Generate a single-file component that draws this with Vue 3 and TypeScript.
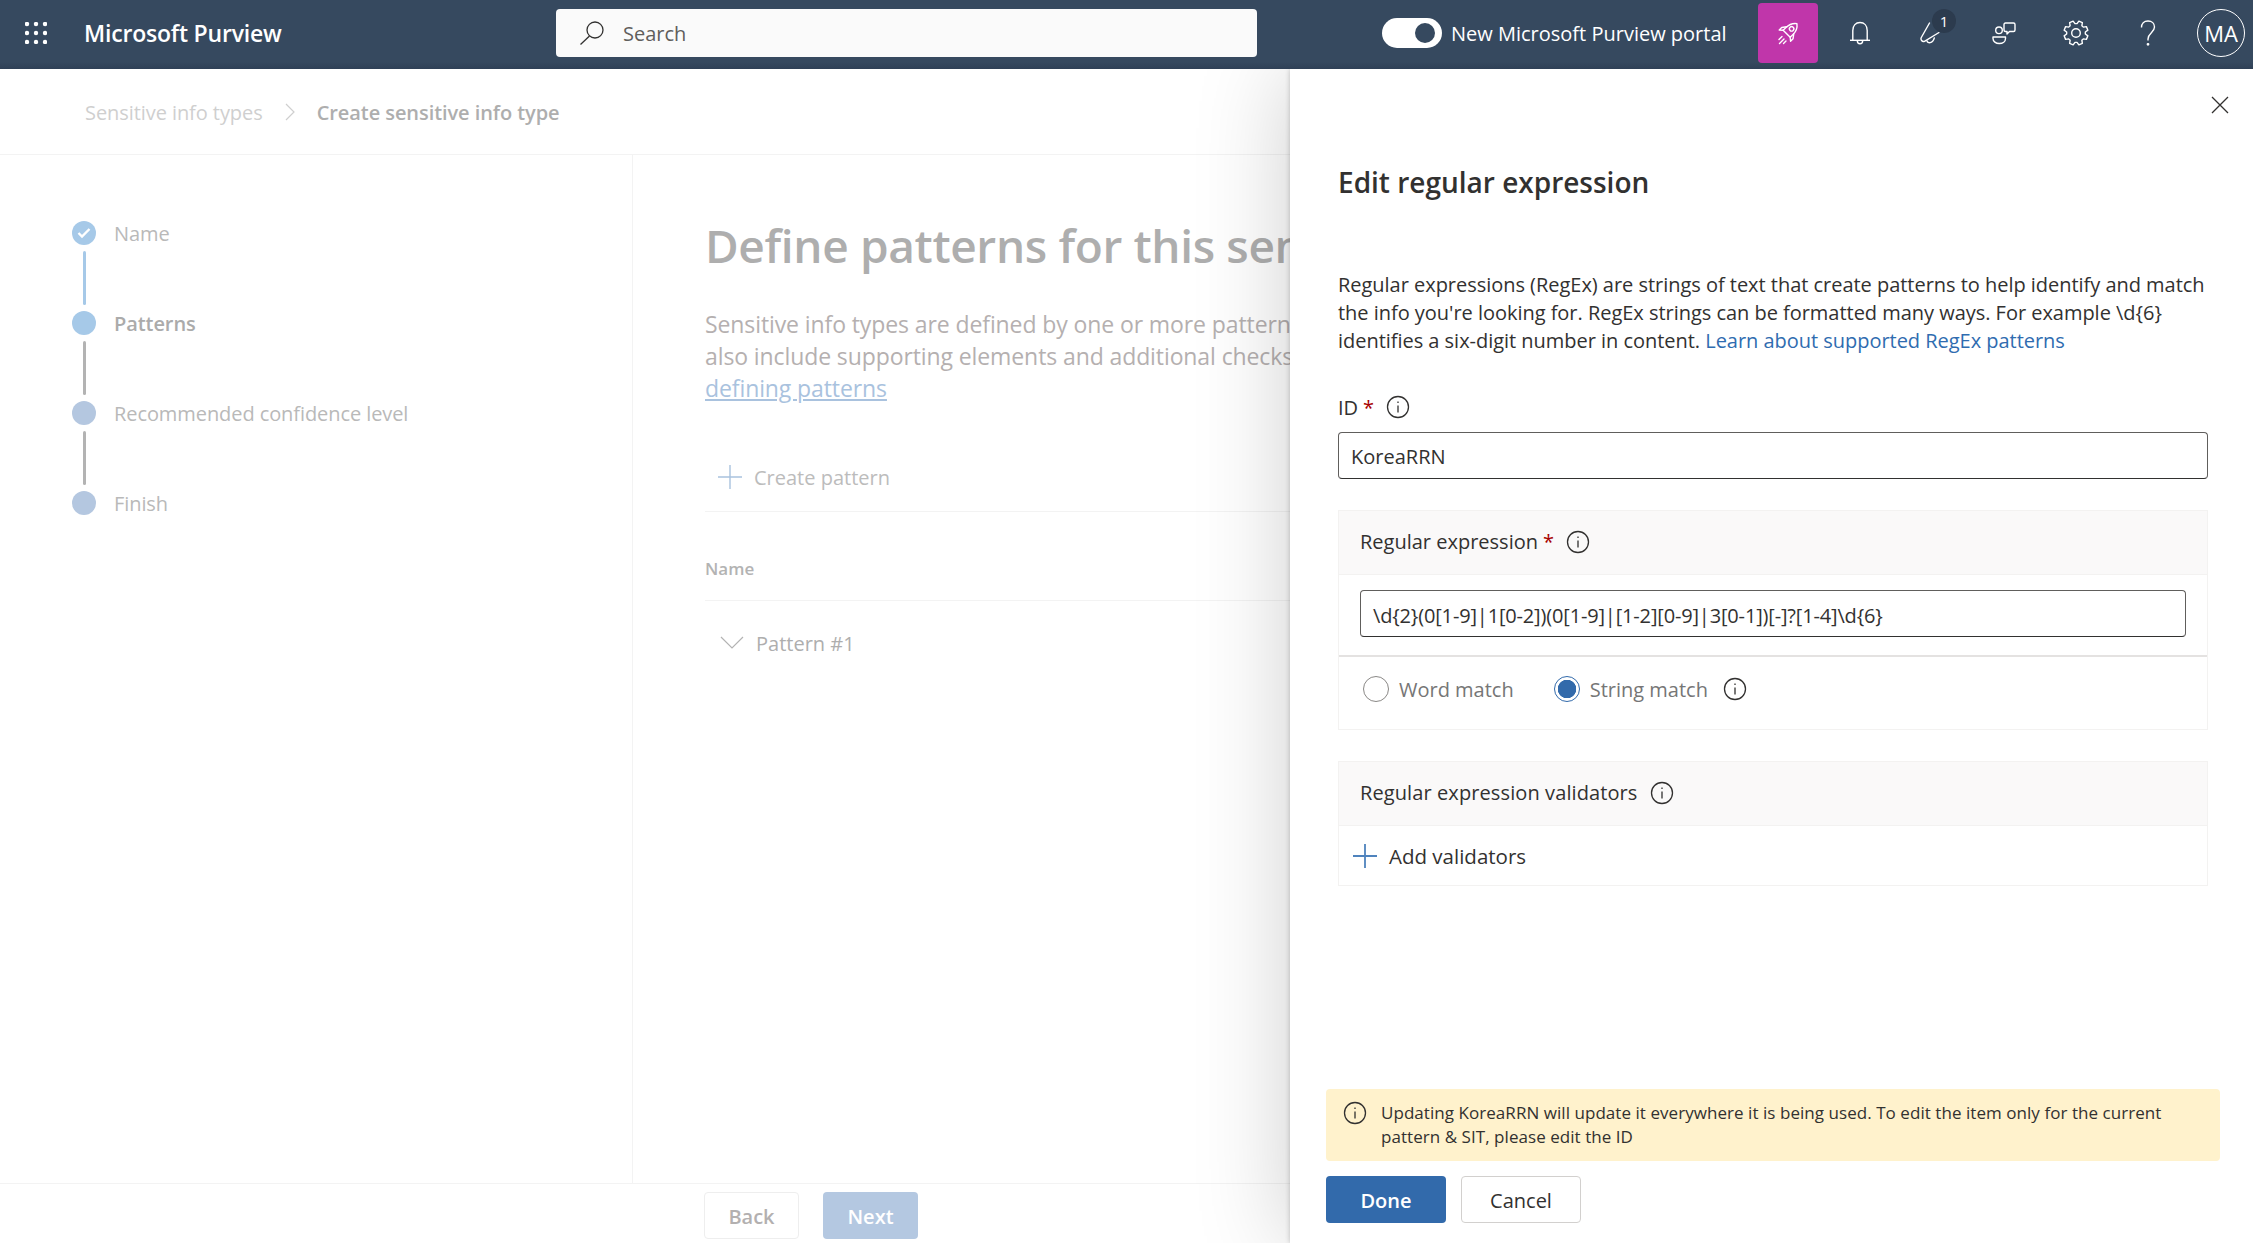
<template>
  <div class="page">
    <header class="topbar">
      <div class="brand">
        <svg class="waffle" width="22" height="22" viewBox="0 0 22 22" fill="#fff">
          <template v-for="cy in [2, 11, 20]" :key="cy">
            <circle v-for="cx in [2, 11, 20]" :key="cx" :cx="cx" :cy="cy" r="2.2" />
          </template>
        </svg>
        <span class="product">Microsoft Purview</span>
      </div>
      <div class="search">
        <svg width="26" height="24" viewBox="0 0 26 24" fill="none" stroke="#323130" stroke-width="1.3">
          <circle cx="16" cy="9" r="8" />
          <path d="M10.5 15 1.5 23.5" />
        </svg>
        <span>Search</span>
      </div>
      <div class="actions">
        <div class="toggle"><span class="knob"></span></div>
        <span class="toggle-label">New Microsoft Purview portal</span>
        <button class="rocket">
          <svg width="24" height="24" viewBox="0 0 24 24" fill="none" stroke="#fff" stroke-width="1.4" stroke-linejoin="round" stroke-linecap="round">
            <g transform="translate(13.5 10) rotate(45)">
              <path d="M0-10.5C4-7.500 5-3.500 5 0v4H-5V0c0-3.500 1-7.500 5-10.500Z" />
              <circle cx="0" cy="-3" r="2.2" />
              <path d="M-5-1-8 3v3.500l3-2.500M5-1l3 4v3.500l-3-2.500" />
            </g>
            <path d="M6 15.500 3 18.500M8 18 3.500 22.500M10 20l-2.500 2.500" />
          </svg>
        </button>
        <button class="tool first-tool">
          <svg width="22" height="24" viewBox="0 0 22 24" fill="none" stroke="#fff" stroke-width="1.4">
            <path d="M3.800 19V9.500C3.800 4.500 6.800 1.500 11 1.500s7.200 3 7.200 8V19" />
            <path d="M1 19.300h20" />
            <path d="M8.300 19.500c0 2 1.100 3.300 2.700 3.300s2.700-1.300 2.700-3.300" />
          </svg>
        </button>
        <button class="tool">
          <svg width="24" height="24" viewBox="0 0 24 24" fill="none" stroke="#fff" stroke-width="1.4" stroke-linecap="round">
            <path d="M9.500 2 1.300 16.500c-1 2 .7 4.700 3.200 3.800L19 11.500" />
            <path d="M7 20c.5 2.500 5.500 3 7.300-3" />
          </svg>
          <span class="badge">1</span>
        </button>
        <button class="tool">
          <svg width="24" height="23" viewBox="0 0 24 23" fill="none" stroke="#fff" stroke-width="1.4" stroke-linejoin="round">
            <circle cx="7" cy="8.300" r="3.300" />
            <path d="M1 15h12.500v1.500c0 3-2.700 5-6.200 5S1 19.500 1 16.500V15Z" />
            <path d="M12 2.500Q12 1 13.500 1h8Q23 1 23 2.500V8q0 1.500-1.500 1.500h-4L15 12V9.500h-1.500Q12 9.500 12 8V2.500Z" />
          </svg>
        </button>
        <button class="tool">
          <svg width="26" height="26" viewBox="0 0 26 26" fill="none" stroke="#fff" stroke-width="1.4" stroke-linejoin="round">
            <path :d="gearPath" />
            <circle cx="13" cy="13" r="4.300" />
          </svg>
        </button>
        <button class="tool">
          <svg width="16" height="26" viewBox="0 0 16 26" fill="none" stroke="#fff" stroke-width="1.4">
            <path d="M1.500 7.500C1.500 3.500 4 1 8 1s6.500 2.500 6.500 6c0 5.500-6.500 6-6.500 12v1.500" />
            <circle cx="8" cy="24.300" r=".7" fill="#fff" />
          </svg>
        </button>
        <div class="avatar">MA</div>
      </div>
    </header>

    <div class="behind">
      <div class="crumbs">
        <span class="crumb-link">Sensitive info types</span>
        <svg width="12" height="18" viewBox="0 0 12 18" fill="none" stroke="#cfcfcf" stroke-width="1.2">
          <path d="m2 1 8 8-8 8" />
        </svg>
        <span class="crumb-current">Create sensitive info type</span>
      </div>
      <div class="wizard">
        <nav class="steps">
          <div v-for="(step, i) in steps" :key="step.label" class="step">
            <div class="rail">
              <span class="dot" :class="step.state">
                <svg v-if="step.state === 'complete'" width="14" height="12" viewBox="0 0 14 12" fill="none" stroke="#fff" stroke-width="2.4">
                  <path d="m1.500 6 3.500 3.500 7.500-7.500" />
                </svg>
              </span>
              <span v-if="i < steps.length - 1" class="link" :class="{ reached: step.state === 'complete' }"></span>
            </div>
            <span class="step-label" :class="{ active: step.state === 'current' }">{{ step.label }}</span>
          </div>
        </nav>
        <main class="content">
          <h1>Define patterns for this sen</h1>
          <p class="intro">
            Sensitive info types are defined by one or more pattern<br />
            also include supporting elements and additional checks<br />
            <a>defining patterns</a>
          </p>
          <div class="create">
            <svg width="26" height="26" viewBox="0 0 26 26" stroke="#a9c2de" stroke-width="1.4">
              <path d="M13 1v24M1 13h24" />
            </svg>
            <span>Create pattern</span>
          </div>
          <div class="col-head">Name</div>
          <div class="pattern-row">
            <svg width="24" height="14" viewBox="0 0 24 14" fill="none" stroke="#b3b3b3" stroke-width="1.2">
              <path d="m1 1 11 11L23 1" />
            </svg>
            <span>Pattern #1</span>
          </div>
        </main>
      </div>
      <footer class="wizard-foot">
        <button class="ghost">Back</button>
        <button class="next">Next</button>
      </footer>
    </div>

    <aside class="panel">
      <div class="close">
        <svg width="18" height="18" viewBox="0 0 18 18" stroke="#323130" stroke-width="1.3">
          <path d="m1 1 16 16M17 1 1 17" />
        </svg>
      </div>
      <div class="panel-body">
        <h2>Edit regular expression</h2>
        <p class="about">
          Regular expressions (RegEx) are strings of text that create patterns to help identify and match<br />
          the info you're looking for. RegEx strings can be formatted many ways. For example \d{6}<br />
          identifies a six-digit number in content.
          <a>Learn about supported RegEx patterns</a>
        </p>
        <label class="field-label">
          ID <span class="req">*</span>
          <svg class="info" width="24" height="24" viewBox="0 0 24 24" fill="none" stroke="#323130" stroke-width="1.3">
            <circle cx="12" cy="12" r="10.500" />
            <path d="M12 10.500v7M12 6.500v1.500" />
          </svg>
        </label>
        <div class="input">KoreaRRN</div>
        <section class="card regex-card">
          <div class="card-head">
            Regular expression <span class="req">*</span>
            <svg class="info" width="24" height="24" viewBox="0 0 24 24" fill="none" stroke="#323130" stroke-width="1.3">
              <circle cx="12" cy="12" r="10.500" />
              <path d="M12 10.500v7M12 6.500v1.500" />
            </svg>
          </div>
          <div class="regex-input">
            <div class="input regex-value">{{ regex }}</div>
          </div>
          <div class="match">
            <span class="radio"></span>
            <span class="match-label">Word match</span>
            <span class="radio on"></span>
            <span class="match-label">String match</span>
            <svg class="info match-info" width="24" height="24" viewBox="0 0 24 24" fill="none" stroke="#323130" stroke-width="1.3">
              <circle cx="12" cy="12" r="10.500" />
              <path d="M12 10.500v7M12 6.500v1.500" />
            </svg>
          </div>
        </section>
        <section class="card validators">
          <div class="card-head">
            <span class="validators-title">Regular expression validators</span>
            <svg class="info" width="24" height="24" viewBox="0 0 24 24" fill="none" stroke="#323130" stroke-width="1.3">
              <circle cx="12" cy="12" r="10.500" />
              <path d="M12 10.500v7M12 6.500v1.500" />
            </svg>
          </div>
          <div class="add">
            <svg width="24" height="24" viewBox="0 0 24 24" stroke="#4f83bd" stroke-width="1.8">
              <path d="M12 0v24M0 12h24" />
            </svg>
            <span>Add validators</span>
          </div>
        </section>
      </div>
      <div class="panel-foot">
        <div class="notice">
          <svg width="24" height="24" viewBox="0 0 24 24" fill="none" stroke="#323130" stroke-width="1.3">
            <circle cx="12" cy="12" r="10.500" />
            <path d="M12 10.500v7M12 6.500v1.500" />
          </svg>
          <span>Updating KoreaRRN will update it everywhere it is being used. To edit the item only for the current<br />pattern &amp; SIT, please edit the ID</span>
        </div>
        <div class="panel-buttons">
          <button class="primary">Done</button>
          <button class="cancel">Cancel</button>
        </div>
      </div>
    </aside>
  </div>
</template>

<script setup lang="ts">
type StepState = 'complete' | 'current' | 'todo';

const steps: { label: string; state: StepState }[] = [
  { label: 'Name', state: 'complete' },
  { label: 'Patterns', state: 'current' },
  { label: 'Recommended confidence level', state: 'todo' },
  { label: 'Finish', state: 'todo' },
];

const regex = '\\d{2}(0[1-9]|1[0-2])(0[1-9]|[1-2][0-9]|3[0-1])[-]?[1-4]\\d{6}';

// eight-tooth cog around the centre of a 26 unit box
function buildGear(teeth: number, outer: number, inner: number): string {
  const step = (Math.PI * 2) / teeth;
  const points: string[] = [];
  for (let i = 0; i < teeth; i++) {
    const a = i * step + step / 2;
    for (const [offset, r] of [
      [-0.36, inner],
      [-0.2, outer],
      [0.2, outer],
      [0.36, inner],
    ]) {
      const x = 13 + r * Math.cos(a + offset * step);
      const y = 13 + r * Math.sin(a + offset * step);
      points.push(`${x.toFixed(2)} ${y.toFixed(2)}`);
    }
  }
  return `M${points.join('L')}Z`;
}

const gearPath = buildGear(8, 12.2, 9.4);
</script>

<style>
html,
body {
  margin: 0;
  overflow: hidden;
  background: #fff;
}
</style>

<style scoped>
* {
  box-sizing: border-box;
}

.page {
  position: relative;
  width: 2253px;
  height: 1243px;
  overflow: hidden;
  display: flex;
  flex-direction: column;
  font-family: 'Open Sans', 'Liberation Sans', sans-serif;
  font-size: 20px;
  color: #323130;
}

button {
  font: inherit;
  background: none;
  border: 0;
  padding: 0;
}

.topbar {
  position: relative;
  z-index: 3;
  flex: none;
  height: 69px;
  padding-bottom: 3px;
  display: flex;
  align-items: center;
  background: linear-gradient(#36495f 90%, #2f4056);
  color: #fff;
}

.brand {
  width: 556px;
  flex: none;
  display: flex;
  align-items: center;
  padding-left: 25px;
}

.waffle {
  margin-right: 37px;
}

.product {
  font-size: 23px;
  font-weight: 600;
  letter-spacing: -0.2px;
}

.search {
  width: 701px;
  height: 48px;
  flex: none;
  display: flex;
  align-items: center;
  gap: 18px;
  padding-left: 23px;
  background: #fafafa;
  border-radius: 4px;
  color: #605e5c;
}

.actions {
  flex: 1;
  display: flex;
  align-items: center;
  padding-left: 125px;
}

.toggle {
  width: 60px;
  height: 30px;
  flex: none;
  display: flex;
  align-items: center;
  justify-content: flex-end;
  padding-right: 7px;
  background: #fff;
  border-radius: 15px;
}

.knob {
  width: 20px;
  height: 20px;
  border-radius: 50%;
  background: #36495f;
}

.toggle-label {
  width: 307px;
  flex: none;
  margin-left: 9px;
}

.rocket {
  width: 60px;
  height: 60px;
  flex: none;
  display: grid;
  place-items: center;
  background: #c036aa;
  border-radius: 4px;
}

.tool {
  position: relative;
  width: 72px;
  height: 60px;
  flex: none;
  display: grid;
  place-items: center;
}

.first-tool {
  margin-left: 6px;
}

.badge {
  position: absolute;
  left: 36px;
  top: 6px;
  width: 24px;
  height: 24px;
  border-radius: 50%;
  background: #2c3b4e;
  color: #fff;
  font-size: 15px;
  line-height: 24px;
  text-align: center;
}

.avatar {
  width: 48px;
  height: 48px;
  flex: none;
  margin-left: 13px;
  border: 1px solid #fff;
  border-radius: 50%;
  display: grid;
  place-items: center;
  font-size: 22px;
}

.behind {
  flex: 1;
  min-height: 0;
  display: flex;
  flex-direction: column;
}

.crumbs {
  height: 86px;
  flex: none;
  display: flex;
  align-items: center;
  gap: 21px;
  padding: 1px 0 0 85px;
  border-bottom: 1px solid #f3f3f3;
  letter-spacing: -0.07px;
}

.crumb-link {
  color: #cfcfcf;
}

.crumb-current {
  color: #aeaeae;
  font-weight: 600;
}

.wizard {
  flex: 1;
  min-height: 0;
  display: flex;
}

.steps {
  width: 633px;
  flex: none;
  padding: 66px 0 0 72px;
  border-right: 1px solid #f3f3f3;
}

.step {
  display: flex;
  gap: 18px;
  height: 90px;
}

.rail {
  width: 24px;
  display: flex;
  flex-direction: column;
  align-items: center;
}

.dot {
  width: 24px;
  height: 24px;
  flex: none;
  display: grid;
  place-items: center;
  border-radius: 50%;
  background: #b4c7e0;
}

.dot.complete,
.dot.current {
  background: #a6c9e8;
}

.link {
  width: 3px;
  height: 54px;
  margin-top: 6px;
  background: #b3b3b3;
  border-radius: 2px;
}

.link.reached {
  background: #a6c9e8;
}

.step-label {
  padding-top: 1px;
  line-height: 24px;
  letter-spacing: -0.08px;
  color: #b9b9b9;
}

.step-label.active {
  color: #ababab;
  font-weight: 600;
}

.content {
  width: 657px;
  flex: none;
  padding: 0 0 0 72px;
  overflow: hidden;
  color: #b5b0b0;
}

h1 {
  margin: 57px 0 0;
  font-size: 46px;
  line-height: 66px;
  font-weight: 600;
  letter-spacing: -0.35px;
  color: #aeaeae;
  white-space: nowrap;
}

.intro {
  margin: 30px 0 0;
  font-size: 23px;
  line-height: 32px;
  letter-spacing: -0.1px;
  white-space: nowrap;
}

.intro a {
  color: #a9c2de;
  text-decoration: underline;
}

.create {
  height: 69px;
  margin-top: 39px;
  display: flex;
  align-items: center;
  gap: 11px;
  padding-left: 12px;
  border-bottom: 1px solid #f3f3f3;
  color: #bcbcbc;
}

.col-head {
  height: 89px;
  display: flex;
  align-items: flex-end;
  padding-bottom: 18px;
  line-height: 27px;
  border-bottom: 1px solid #f3f3f3;
  font-size: 17px;
  font-weight: 600;
  color: #b3b3b3;
}

.pattern-row {
  height: 82px;
  display: flex;
  align-items: center;
  gap: 12px;
  padding: 2px 0 0 15px;
  font-weight: 500;
  color: #aeaeae;
}

.wizard-foot {
  height: 60px;
  flex: none;
  display: flex;
  align-items: flex-start;
  gap: 24px;
  padding: 8px 0 0 704px;
  border-top: 1px solid #f3f3f3;
}

.ghost,
.next {
  width: 95px;
  height: 47px;
  padding-top: 1px;
  border-radius: 4px;
  font-weight: 600;
}

.ghost {
  border: 1px solid #eeeeee;
  color: #b3b0b0;
}

.next {
  background: #b4c8e1;
  color: #fff;
}

.panel {
  position: absolute;
  z-index: 2;
  top: 69px;
  right: 0;
  bottom: 0;
  width: 963px;
  display: flex;
  flex-direction: column;
  background: #fff;
  box-shadow: 0 0 5px rgba(0, 0, 0, 0.22), 0 0 90px rgba(0, 0, 0, 0.2);
}

.close {
  height: 0;
  display: flex;
  justify-content: flex-end;
  padding-right: 24px;
}

.close svg {
  margin-top: 27px;
}

.panel-body {
  flex: 1;
  min-height: 0;
  padding: 88px 45px 0 48px;
}

h2 {
  margin: 0;
  font-size: 28px;
  line-height: 50px;
  font-weight: 600;
}

.about {
  margin: 64px 0 0;
  line-height: 28px;
  letter-spacing: -0.03px;
  white-space: nowrap;
}

.about a {
  color: #2f6cb0;
}

.req {
  color: #a80000;
  margin-left: 1px;
}

.info {
  flex: none;
  margin-left: 8px;
}

.field-label {
  display: flex;
  align-items: center;
  gap: 4px;
  height: 30px;
  margin-top: 37px;
  font-weight: 500;
}

.input {
  height: 47px;
  margin-top: 10px;
  padding: 2px 0 0 12px;
  display: flex;
  align-items: center;
  background: #fff;
  border: 1px solid #605e5c;
  border-bottom-color: #323130;
  border-radius: 4px;
}

.regex-value {
  padding-top: 3px;
  letter-spacing: -0.16px;
}

.card {
  border: 1px solid #f3f2f1;
  margin-top: 31px;
}

.regex-card {
  height: 220px;
}

.validators {
  height: 125px;
}

.card-head {
  height: 64px;
  display: flex;
  align-items: center;
  gap: 4px;
  padding: 0 0 2px 21px;
  background: #faf9f9;
  border-bottom: 1px solid #f3f2f1;
  font-weight: 500;
}

.validators-title {
  letter-spacing: 0.1px;
}

.regex-input {
  padding: 5px 21px 18px;
  border-bottom: 2px solid #e4e2e1;
}

.match {
  display: flex;
  align-items: center;
  height: 64px;
  padding: 0 0 0 24px;
}

.match-info {
  margin-left: 15px;
}

.radio {
  width: 26px;
  height: 26px;
  flex: none;
  border: 1px solid #8a8886;
  border-radius: 50%;
}

.radio.on {
  margin-left: 40px;
  padding: 3px;
  border-color: #326aab;
  background: radial-gradient(circle, #326aab 9px, #fff 9.5px);
}

.match-label {
  margin-left: 10px;
  color: #767676;
}

.add {
  height: 60px;
  display: flex;
  align-items: center;
  gap: 12px;
  padding-left: 14px;
  font-size: 20.5px;
  font-weight: 500;
}

.panel-foot {
  flex: none;
  padding: 0 33px 20px 36px;
}

.notice {
  height: 72px;
  display: flex;
  gap: 14px;
  padding: 12px 20px 0 17px;
  background: #fff2cc;
  border-radius: 4px;
  font-size: 17px;
  line-height: 24px;
  letter-spacing: 0.05px;
}

.notice svg {
  flex: none;
}

.panel-buttons {
  display: flex;
  gap: 15px;
  margin-top: 15px;
}

.primary,
.cancel {
  width: 120px;
  height: 47px;
  padding-top: 2px;
  border-radius: 4px;
  font-weight: 600;
}

.primary {
  background: #326aab;
  color: #fff;
}

.cancel {
  border: 1px solid #d2d0ce;
  font-weight: 500;
  color: #323130;
}
</style>
